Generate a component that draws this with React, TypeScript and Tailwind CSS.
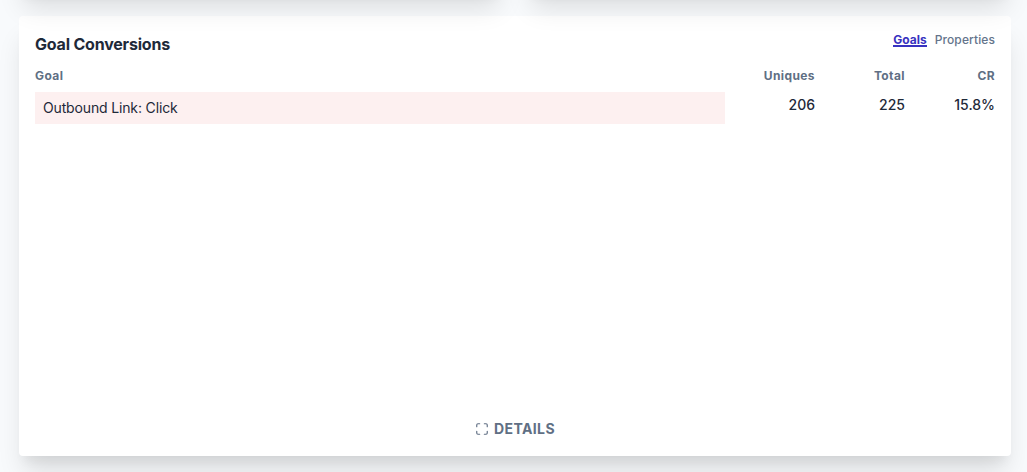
const goals = [
  { name: 'Outbound Link: Click', uniques: '206', total: '225', cr: '15.8%' },
]

function DetailsLink() {
  return (
    <div className="-mt-px mb-px flex justify-center">
      <a className="flex items-center text-sm leading-5 font-bold tracking-[0.4px] text-[#606f84]">
        <svg
          className="mr-[5px] h-3.5 w-3.5"
          viewBox="0 0 24 24"
          fill="none"
          stroke="currentColor"
          strokeWidth="2"
          strokeLinecap="round"
          strokeLinejoin="round"
        >
          <path d="M8 3H5a2 2 0 0 0-2 2v3m18 0V5a2 2 0 0 0-2-2h-3m0 18h3a2 2 0 0 0 2-2v-3M3 16v3a2 2 0 0 0 2 2h3" />
        </svg>
        DETAILS
      </a>
    </div>
  )
}

function GoalConversions() {
  return (
    <section className="flex h-[440px] flex-col rounded bg-white p-4 shadow-[0_20px_25px_-5px_rgba(0,0,0,0.12),0_10px_10px_-5px_rgba(0,0,0,0.05)]">
      <div className="flex justify-between">
        <h3 className="text-base leading-6 font-bold tracking-[-0.2px] text-gray-800">Goal Conversions</h3>
        <div className="flex gap-2 text-xs leading-4">
          <span className="h-[15px] border-b-2 border-[#3732c0] font-bold text-[#3732c0]">Goals</span>
          <span className="font-medium tracking-[0.1px] text-[#64748b]">Properties</span>
        </div>
      </div>

      <div className="mt-3 flex text-xs leading-4 font-bold tracking-[0.4px] text-[#606f84]">
        <span className="flex-1">Goal</span>
        <span className="w-[90px] text-right">Uniques</span>
        <span className="w-[90px] text-right">Total</span>
        <span className="w-[90px] text-right">CR</span>
      </div>

      <div className="mt-2 flex-1">
        {goals.map((goal) => (
          <div key={goal.name} className="flex text-sm leading-5 text-gray-800">
            <div className="flex h-8 flex-1 items-center bg-[#fdf0f0] px-2 tracking-[-0.15px]">{goal.name}</div>
            <span className="w-[90px] pt-[3px] text-right font-medium">{goal.uniques}</span>
            <span className="w-[90px] pt-[3px] text-right font-medium">{goal.total}</span>
            <span className="w-[90px] pt-[3px] text-right font-medium">{goal.cr}</span>
          </div>
        ))}
      </div>

      <DetailsLink />
    </section>
  )
}

export default function App() {
  return (
    <div className="h-[472px] overflow-hidden bg-[#f8fafc] pr-4 pl-[19px] font-['Inter',sans-serif]">
      {/* Bottom edge of the report cards above */}
      <div className="relative -mt-[104px] mb-6 flex h-24 gap-6">
        <div className="flex-1 rounded bg-white shadow-[0_20px_25px_-5px_rgba(0,0,0,0.12),0_10px_10px_-5px_rgba(0,0,0,0.05)]" />
        <div className="flex-1 rounded bg-white shadow-[0_20px_25px_-5px_rgba(0,0,0,0.12),0_10px_10px_-5px_rgba(0,0,0,0.05)]" />
      </div>
      <GoalConversions />
    </div>
  )
}
